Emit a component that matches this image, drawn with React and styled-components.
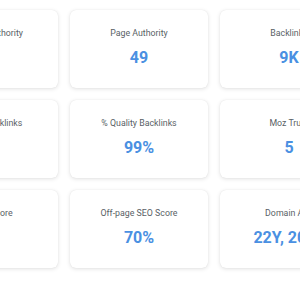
import React from 'react';
import styled, { createGlobalStyle } from 'styled-components';

const GlobalStyle = createGlobalStyle`
  html, body {
    margin: 0;
    padding: 0;
    background: #ffffff;
    font-family: Roboto, "Liberation Sans", sans-serif;
    overflow: hidden;
  }
`;

const StyledWrapper = styled.div`
  width: 300px;
  height: 300px;
  overflow: hidden;
`;

const GridWrapper = styled.div`
  display: grid;
  grid-template-columns: repeat(3, 138px);
  grid-auto-rows: 78px;
  gap: 12px;
  margin: 10px 0 0 -80px;
`;

const Card = styled.div`
  background: #ffffff;
  border-radius: 6px;
  box-shadow: 0 1px 4px rgba(0, 0, 0, 0.12), 0 0 1px rgba(0, 0, 0, 0.1);
  display: flex;
  flex-direction: column;
  align-items: center;
  padding-top: 17px;
  box-sizing: border-box;
`;

const Label = styled.div`
  font-size: 8.8px;
  line-height: 12px;
  color: #5a5f66;
  white-space: nowrap;
`;

const Value = styled.div`
  margin-top: 9px;
  font-size: 16px;
  line-height: 19px;
  font-weight: 700;
  color: #4a90e2;
  white-space: nowrap;
`;

const metrics = [
  ['Domain Authority', '45'],
  ['Page Authority', '49'],
  ['Backlinks', '9K'],
  ['Quality Backlinks', '9K'],
  ['% Quality Backlinks', '99%'],
  ['Moz Trust', '5'],
  ['Spam Score', '3'],
  ['Off-page SEO Score', '70%'],
  ['Domain Age', '22Y, 2023'],
];

const App = () => (
  <StyledWrapper>
    <GlobalStyle />
    <GridWrapper>
      {metrics.map(([label, value]) => (
        <Card key={label}>
          <Label>{label}</Label>
          <Value>{value}</Value>
        </Card>
      ))}
    </GridWrapper>
  </StyledWrapper>
);

export default App;
